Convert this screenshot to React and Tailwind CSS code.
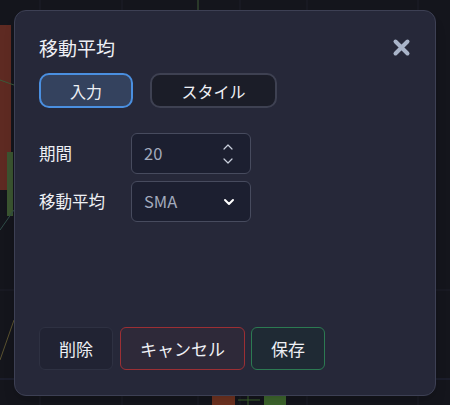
import React from 'react';

const font = { fontFamily: '"Noto Sans CJK JP", "Noto Sans", sans-serif' };

function ChartBackdrop() {
  return (
    <svg className="absolute inset-0" width="450" height="405" viewBox="0 0 450 405">
      <rect width="450" height="405" fill="#14151c" />
      {[40, 122, 198, 240, 307, 418].map((x) => (
        <line key={x} x1={x} y1="0" x2={x} y2="405" stroke="#1d1f29" strokeWidth="1" />
      ))}
      <line x1="0" y1="379" x2="450" y2="379" stroke="#23263a" strokeWidth="1" />
      <line x1="0" y1="290" x2="450" y2="290" stroke="#1c1e28" strokeWidth="1" />
      <line x1="198" y1="0" x2="198" y2="10" stroke="#3c5a30" strokeWidth="1" />
      <rect x="0" y="25" width="11" height="165" fill="#5e2a22" />
      <rect x="7" y="152" width="6" height="64" fill="#3a5430" />
      <path d="M0 80 L14 85" stroke="#3b5a3a" strokeWidth="1" fill="none" />
      <path d="M0 230 L14 210" stroke="#2f4c48" strokeWidth="1" fill="none" />
      <path d="M0 360 L14 320" stroke="#5a5230" strokeWidth="1" fill="none" />
      <rect x="212" y="396" width="23" height="9" fill="#6e3220" />
      <rect x="264" y="396" width="22" height="9" fill="#3d652d" />
      <line x1="248" y1="396" x2="248" y2="405" stroke="#3d652d" strokeWidth="1" />
      <line x1="238" y1="400" x2="260" y2="400" stroke="#3d652d" strokeWidth="1" />
    </svg>
  );
}

function Chevron({ dir = 'down', className = '', stroke = '#c9cfdc', width = 1.6 }) {
  const d = dir === 'down' ? 'M2 2 L6 6 L10 2' : 'M2 6 L6 2 L10 6';
  return (
    <svg className={className} width="12" height="8" viewBox="0 0 12 8" fill="none">
      <path d={d} stroke={stroke} strokeWidth={width} strokeLinecap="round" strokeLinejoin="round" />
    </svg>
  );
}

export default function App() {
  return (
    <div className="relative w-[450px] h-[405px] overflow-hidden bg-[#14151c]" style={font}>
      <ChartBackdrop />
      <div className="relative ml-[14px] mt-[10px] w-[422px] h-[386px] rounded-[12px] border border-[#3d4054] bg-[#262839] pl-[24px] pr-[25px] pb-[25px] flex flex-col shadow-lg">
        <div className="flex items-center justify-between pt-[23px] h-[50px]">
          <h2 className="text-[19px] leading-[27px] text-[#eef0f5] font-normal">移動平均</h2>
          <svg width="19" height="19" viewBox="0 0 19 19" className="mr-[-1px]">
            <path d="M3.5 3.5 L15.5 15.5 M15.5 3.5 L3.5 15.5" stroke="#a9b4c9" strokeWidth="4" strokeLinecap="round" />
          </svg>
        </div>

        <div className="flex gap-[17px] mt-[12px]">
          <button className="w-[94px] h-[35px] rounded-[10px] border-2 border-[#4a8fe0] bg-[#34425e] text-[16px] text-[#eef0f5]">入力</button>
          <button className="w-[127px] h-[35px] rounded-[10px] border-2 border-[#3e4152] bg-[#1b1d28] text-[16px] text-[#eef0f5]">スタイル</button>
        </div>

        <div className="flex flex-col gap-[7px] mt-[25px]">
          <div className="flex items-center">
            <span className="w-[92px] text-[16.5px] text-[#eef0f5]">期間</span>
            <div className="w-[120px] h-[41px] rounded-[6px] border border-[#474b5e] bg-[#1c1f30] flex items-center justify-between pl-[12px] pr-[16px]">
              <span className="text-[16.5px] text-[#a3abbd]">20</span>
              <div className="flex flex-col gap-[6px]">
                <Chevron dir="up" width={1.2} />
                <Chevron dir="down" width={1.2} />
              </div>
            </div>
          </div>
          <div className="flex items-center">
            <span className="w-[92px] text-[16.5px] text-[#eef0f5]">移動平均</span>
            <div className="w-[120px] h-[41px] rounded-[6px] border border-[#474b5e] bg-[#1c1f30] flex items-center justify-between pl-[12px] pr-[15px]">
              <span className="text-[16.5px] text-[#a3abbd]">SMA</span>
              <Chevron dir="down" stroke="#ffffff" width={2} />
            </div>
          </div>
        </div>

        <div className="mt-auto flex items-center">
          <button className="w-[74px] h-[43px] rounded-[6px] border border-[#2e3142] bg-[#212333] text-[17px] text-[#eef0f5]">削除</button>
          <button className="ml-[7px] w-[125px] h-[43px] rounded-[6px] border border-[#9c2f34] bg-[#2e2939] text-[17px] text-[#eef0f5]">キャンセル</button>
          <button className="ml-[6px] w-[74px] h-[43px] rounded-[6px] border border-[#2c7a52] bg-[#1f2a34] text-[17px] text-[#eef0f5]">保存</button>
        </div>
      </div>
    </div>
  );
}
